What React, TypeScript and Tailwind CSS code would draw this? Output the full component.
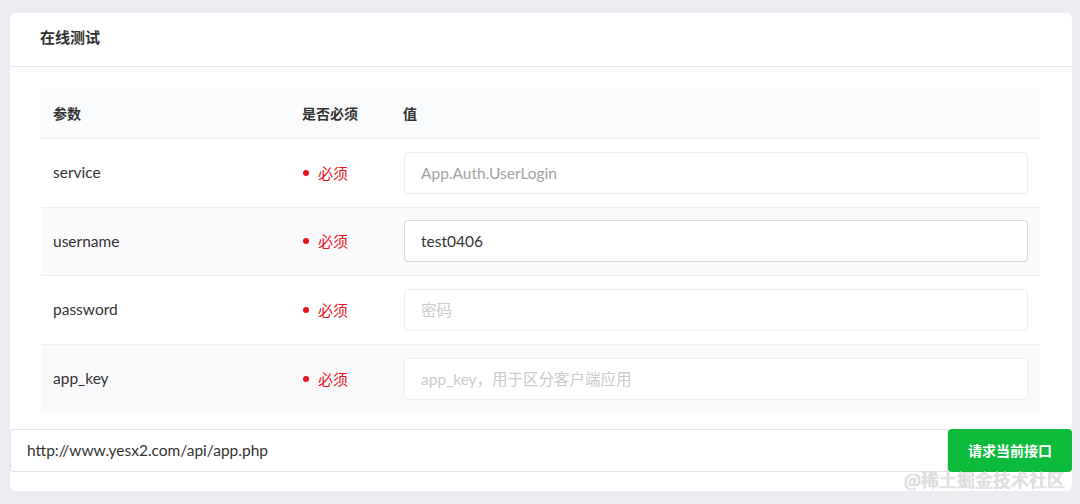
import React from "react";

const latin = { fontFamily: 'Lato, "Noto Sans CJK SC", sans-serif' };

type Row = { name: string; value?: string; placeholder: string; ph: string; bg: string; active?: boolean };

const rows: Row[] = [
  { name: "service", placeholder: "App.Auth.UserLogin", ph: "placeholder:text-[#a3a3a3]", bg: "bg-white" },
  { name: "username", value: "test0406", placeholder: "", ph: "placeholder:text-[#a3a3a3]", bg: "bg-[#faf9fb]", active: true },
  { name: "password", placeholder: "密码", ph: "placeholder:text-[#cbcbcb]", bg: "bg-white" },
  { name: "app_key", placeholder: "app_key，用于区分客户端应用", ph: "placeholder:text-[#cbcbcb]", bg: "bg-[#f9f9fb]" },
];

export default function App() {
  return (
    <div className="w-[1080px] h-[504px] bg-[#ebecef] pt-[13px] pl-[10px] overflow-hidden relative" style={latin}>
      <div className="w-[1062px] h-[478px] bg-white rounded-[6px] flex flex-col">
        <div className="h-[54px] border-b border-[#e8e8ea] flex items-center pl-[30px] pb-[4px]">
          <span className="text-[15px] font-bold text-[#333]">在线测试</span>
        </div>
        <div className="mt-[21px] ml-[31px] w-[999px] flex flex-col">
          <div className="h-[51px] bg-[#fafbfc] border-b border-[#ececee] flex items-center text-[14px] font-bold text-[#333]">
            <div className="w-[250px] pl-[12px]">参数</div>
            <div className="w-[100px] pl-[11px]">是否必须</div>
            <div className="pl-[12px]">值</div>
          </div>
          {rows.map((r, i) => (
            <div
              key={r.name}
              className={`h-[68.5px] flex items-center ${r.bg} ${i < rows.length - 1 ? "border-b border-[#efeff1]" : ""}`}
            >
              <div className="w-[250px] pl-[12px] text-[15.5px] text-[#333]">{r.name}</div>
              <div className="w-[100px] pl-[12px] flex items-center text-[15px] text-[#e8141b]">
                <span className="w-[6px] h-[6px] rounded-full bg-[#e8141b] mr-[9px]" />
                必须
              </div>
              <div className="pl-[13px] pr-[12px] flex-1">
                <input
                  readOnly
                  defaultValue={r.value}
                  placeholder={r.placeholder}
                  className={`w-full h-[42px] rounded-[4px] bg-white border ${r.active ? "border-[#d9d9dc]" : "border-[#ededef]"} pl-[16px] text-[15.5px] text-[#333] outline-none ${r.ph}`}
                  style={latin}
                />
              </div>
            </div>
          ))}
        </div>
        <div className="mt-[16px] flex h-[43px]">
          <div className="flex-1 h-[43px] border border-[#e4e4e6] rounded-l-[3px] flex items-center pl-[16px] text-[15.5px] text-[#333]">
            http://www.yesx2.com/api/app.php
          </div>
          <button className="w-[124px] h-[43px] bg-[#0dbb3c] rounded-[4px] text-white text-[14px] font-bold flex items-center justify-center">
            请求当前接口
          </button>
        </div>
      </div>
      <div
        className="absolute left-[904px] top-[466px] text-[18px] text-[#e4e4e6]"
        style={{ fontFamily: '"Noto Sans CJK SC", sans-serif', textShadow: "0 0 1px rgba(0,0,0,0.35)" }}
      >
        @稀土掘金技术社区
      </div>
    </div>
  );
}
